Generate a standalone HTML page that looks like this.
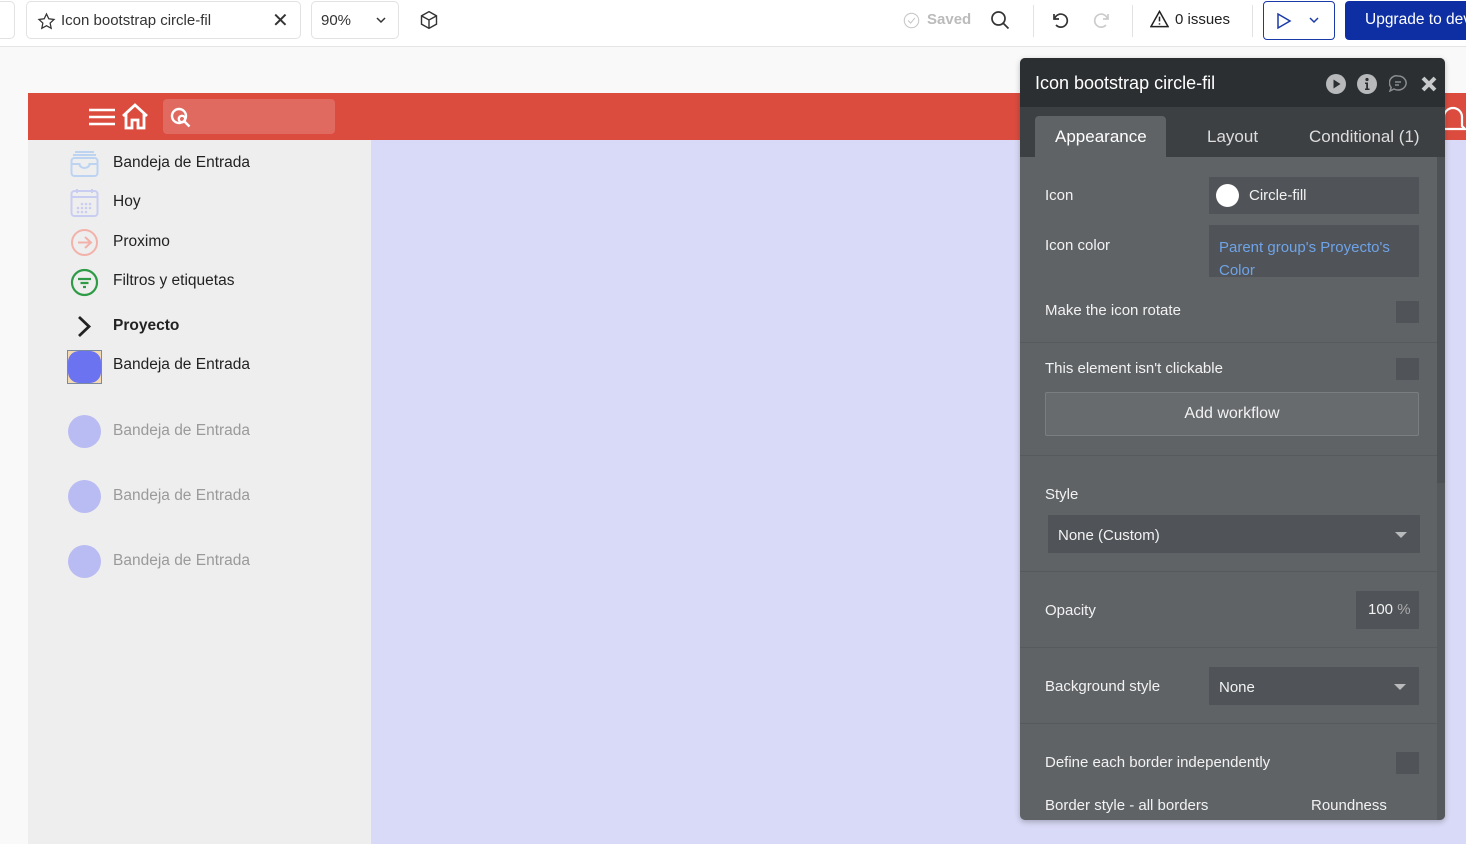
<!DOCTYPE html>
<html><head><meta charset="utf-8"><style>
*{box-sizing:border-box;margin:0;padding:0}
body{width:1466px;height:844px;overflow:hidden;position:relative;background:#f9f9f9;font-family:"Liberation Sans",sans-serif}
.a{position:absolute}
.top{left:0;top:0;width:1466px;height:47px;background:#fff;border-bottom:1px solid #e4e4e4}
.box{border:1px solid #e2e2e2;border-radius:5px;background:#fff}
.t{font-size:15px;color:#333}
.side{left:28px;top:140px;width:343px;height:704px;background:#eeeeee}
.main{left:371px;top:140px;width:1095px;height:704px;background:#d9daf7}
.it{position:absolute;left:113px;font-size:15.5px;color:#222}
.ci{position:absolute;left:68px;width:33px;height:33px;border-radius:50%;background:#b9bbf3}
.p{left:1020px;top:58px;width:425px;height:762px;background:#5f6366;border-radius:5px;overflow:hidden;box-shadow:0 2px 6px rgba(0,0,0,.25);color:#f2f2f2;font-size:15px}
.lbl{position:absolute;left:25px}
.fld{position:absolute;background:#505458}
.chk{position:absolute;left:376px;width:23px;height:22px;background:#505458}
.sep{position:absolute;left:0;width:417px;height:1px;background:#565a5d}
</style></head><body>
<div class="a top">
 <div class="a box" style="left:-10px;top:1px;width:25px;height:38px"></div>
 <div class="a box" style="left:26px;top:1px;width:275px;height:38px">
  <svg class="a" style="left:10px;top:10px" width="19" height="19" viewBox="0 0 24 24" fill="none" stroke="#333" stroke-width="1.6"><path d="M12 2.5l2.9 6.1 6.6.8-4.9 4.6 1.3 6.6L12 17.3 6.1 20.6l1.3-6.6-4.9-4.6 6.6-.8z"/></svg>
  <span class="a t" style="left:34px;top:10px">Icon bootstrap circle-fil</span>
  <span class="a" style="left:245px;top:6px;font-size:20px;color:#333">✕</span>
 </div>
 <div class="a box" style="left:311px;top:1px;width:88px;height:38px">
  <span class="a t" style="left:9px;top:10px">90%</span>
  <svg class="a" style="left:64px;top:15px" width="10" height="7" viewBox="0 0 10 7"><path d="M1 1l4 4 4-4" fill="none" stroke="#333" stroke-width="1.5"/></svg>
 </div>
 <svg class="a" style="left:419px;top:10px" width="20" height="20" viewBox="0 0 24 24" fill="none" stroke="#333" stroke-width="1.7"><path d="M12 2l9 5v10l-9 5-9-5V7z M3 7l9 5 9-5 M12 12v10"/></svg>
 <svg class="a" style="left:903px;top:12px" width="17" height="17" viewBox="0 0 20 20" fill="none" stroke="#c8c8c8" stroke-width="1.3"><circle cx="10" cy="10" r="8.5"/><path d="M6 10l3 3 5-6"/></svg>
 <span class="a" style="left:927px;top:11px;font-size:15px;color:#bbb;font-weight:bold">Saved</span>
 <svg class="a" style="left:990px;top:10px" width="20" height="20" viewBox="0 0 20 20" fill="none" stroke="#333" stroke-width="1.7"><circle cx="8.5" cy="8.5" r="6.5"/><path d="M13.5 13.5l5 5"/></svg>
 <div class="a" style="left:1033px;top:5px;width:1px;height:32px;background:#e2e2e2"></div>
 <svg class="a" style="left:1050px;top:10px" width="20" height="20" viewBox="0 0 20 20" fill="none" stroke="#333" stroke-width="1.7"><path d="M4 4v5h5"/><path d="M4.5 9a6.5 6.5 0 1 1 1.5 6"/></svg>
 <svg class="a" style="left:1092px;top:10px" width="20" height="20" viewBox="0 0 20 20" fill="none" stroke="#ccc" stroke-width="1.7"><path d="M16 4v5h-5"/><path d="M15.5 9a6.5 6.5 0 1 0-1.5 6"/></svg>
 <div class="a" style="left:1132px;top:5px;width:1px;height:32px;background:#e2e2e2"></div>
 <svg class="a" style="left:1150px;top:10px" width="19" height="18" viewBox="0 0 20 19" fill="none" stroke="#222" stroke-width="1.6"><path d="M10 1.5L19 17.5H1z M10 7v5 M10 14v1.5"/></svg>
 <span class="a" style="left:1175px;top:11px;font-size:15px;color:#222">0 issues</span>
 <div class="a" style="left:1252px;top:5px;width:1px;height:32px;background:#e2e2e2"></div>
 <div class="a" style="left:1263px;top:1px;width:72px;height:39px;border:1.5px solid #1a3aa8;border-radius:4px;background:#fff">
  <svg class="a" style="left:12px;top:10px" width="16" height="18" viewBox="0 0 16 18" fill="none" stroke="#1a3aa8" stroke-width="1.5"><path d="M2 2l12 7-12 7z"/></svg>
  <svg class="a" style="left:45px;top:15px" width="10" height="7" viewBox="0 0 10 7"><path d="M1 1l4 4 4-4" fill="none" stroke="#1a3aa8" stroke-width="1.5"/></svg>
 </div>
 <div class="a" style="left:1345px;top:1px;width:130px;height:39px;background:#0d2fa3;border-radius:4px;color:#fff;font-size:15.5px;padding:10px 0 0 20px;white-space:nowrap">Upgrade to dev</div>
</div>

<div class="a" style="left:28px;top:93px;width:1438px;height:47px;background:#db4c3f"></div>
<svg class="a" style="left:89px;top:107px" width="26" height="20" viewBox="0 0 26 20" stroke="#fff" stroke-width="2.6"><path d="M0 3h26M0 10h26M0 17h26"/></svg>
<svg class="a" style="left:121px;top:103px" width="28" height="27" viewBox="0 0 28 27" fill="none" stroke="#fff" stroke-width="2.8"><path d="M2 13L14 2l12 11M5 11v14h6v-8h6v8h6V11"/></svg>
<div class="a" style="left:163px;top:99px;width:172px;height:35px;background:#e06a60;border-radius:4px"></div>
<svg class="a" style="left:170px;top:107px" width="22" height="21" viewBox="0 0 22 21" fill="none" stroke="#fff" stroke-width="2.4"><circle cx="9" cy="9" r="7"/><circle cx="12" cy="12" r="3.2"/><path d="M14.5 14.5l5 5"/></svg>
<svg class="a" style="left:1440px;top:104px" width="26" height="30" viewBox="0 0 26 30" fill="none" stroke="#fff" stroke-width="2.2"><path d="M4 22V13a9 9 0 0 1 18 0v9l3 3H1z"/></svg>

<div class="a side"></div>
<div class="a main"></div>
<svg class="a" style="left:70px;top:150px" width="29" height="27" viewBox="0 0 29 27" fill="none" stroke="#bcd3f2" stroke-width="2"><rect x="1.5" y="8" width="26" height="18" rx="3"/><path d="M5 2h19M3 5h23M1.5 14h8a5 4 0 0 0 10 0h8"/></svg>
<div class="it" style="top:154px">Bandeja de Entrada</div>
<svg class="a" style="left:70px;top:188px" width="29" height="29" viewBox="0 0 29 29" fill="none" stroke="#c9cdf1" stroke-width="2"><rect x="1.5" y="3" width="26" height="25" rx="3"/><path d="M1.5 9h26M7 1v4M22 1v4"/><g fill="#c9cdf1" stroke="none"><circle cx="8" cy="20" r="1.3"/><circle cx="12" cy="20" r="1.3"/><circle cx="16" cy="20" r="1.3"/><circle cx="20" cy="20" r="1.3"/><circle cx="12" cy="16" r="1.3"/><circle cx="16" cy="16" r="1.3"/><circle cx="20" cy="16" r="1.3"/><circle cx="8" cy="24" r="1.3"/><circle cx="12" cy="24" r="1.3"/><circle cx="16" cy="24" r="1.3"/></g></svg>
<div class="it" style="top:193px">Hoy</div>
<svg class="a" style="left:70px;top:228px" width="29" height="29" viewBox="0 0 29 29" fill="none" stroke="#f2b2aa" stroke-width="2"><circle cx="14.5" cy="14.5" r="12.5"/><path d="M8 14.5h13M15 9l6 5.5-6 5.5"/></svg>
<div class="it" style="top:233px">Proximo</div>
<svg class="a" style="left:70px;top:268px" width="29" height="29" viewBox="0 0 29 29" fill="none" stroke="#2e9b47" stroke-width="2.2"><circle cx="14.5" cy="14.5" r="12.5"/><path d="M8 11h13M10.5 15h8M13 19h3"/></svg>
<div class="it" style="top:272px">Filtros y etiquetas</div>
<svg class="a" style="left:76px;top:315px" width="16" height="23" viewBox="0 0 16 23" fill="none" stroke="#222" stroke-width="2.8"><path d="M3 2l10 9.5L3 21"/></svg>
<div class="it" style="top:317px;font-weight:bold">Proyecto</div>
<div class="a" style="left:67px;top:350px;width:35px;height:34px;border:1px solid #7a8aa0;background:#f3d9b0"></div>
<div class="a" style="left:68px;top:351px;width:33px;height:32px;border-radius:11px;background:#6b73f0"></div>
<div class="it" style="top:356px">Bandeja de Entrada</div>
<div class="ci" style="top:415px"></div><div class="it" style="top:422px;color:#9a9a9a">Bandeja de Entrada</div>
<div class="ci" style="top:480px"></div><div class="it" style="top:487px;color:#9a9a9a">Bandeja de Entrada</div>
<div class="ci" style="top:545px"></div><div class="it" style="top:552px;color:#9a9a9a">Bandeja de Entrada</div>

<div class="a p">
 <div class="a" style="left:0;top:0;width:425px;height:49px;background:#2b2f31"></div>
 <div class="a" style="left:15px;top:15px;font-size:18px;color:#fff">Icon bootstrap circle-fil</div>
 <svg class="a" style="left:306px;top:16px" width="20" height="20" viewBox="0 0 20 20"><circle cx="10" cy="10" r="10" fill="#b8b9ba"/><path d="M7.5 5.5l7 4.5-7 4.5z" fill="#2b2f31"/></svg>
 <svg class="a" style="left:337px;top:16px" width="20" height="20" viewBox="0 0 20 20"><circle cx="10" cy="10" r="10" fill="#b8b9ba"/><circle cx="10" cy="5.5" r="1.6" fill="#2b2f31"/><path d="M8 8.5h3v6h1.5v1.5h-4.5v-1.5h1.2V10H8z" fill="#2b2f31"/></svg>
 <svg class="a" style="left:369px;top:17px" width="18" height="17" viewBox="0 0 18 17" fill="none" stroke="#8a8c8e" stroke-width="1.5"><path d="M9 1a8 7 0 1 1-4 13l-4 2 1.2-3.5A7 7 0 0 1 9 1z M6 7h6M6 10h4"/></svg>
 <svg class="a" style="left:401px;top:18px" width="16" height="16" viewBox="0 0 16 16" stroke="#c8c9ca" stroke-width="4"><path d="M2 2l12 12M14 2L2 14"/></svg>
 <div class="a" style="left:0;top:49px;width:425px;height:50px;background:#3d4043"></div>
 <div class="a" style="left:15px;top:58px;width:131px;height:42px;background:#5f6366;border-radius:4px 4px 0 0"></div>
 <div class="a" style="left:35px;top:69px;font-size:17px;color:#fff">Appearance</div>
 <div class="a" style="left:187px;top:69px;font-size:17px;color:#ddd">Layout</div>
 <div class="a" style="left:289px;top:69px;font-size:17px;color:#ddd">Conditional (1)</div>
 <div class="a" style="left:417px;top:99px;width:8px;height:663px;background:#55595c"></div>
 <div class="a" style="left:417px;top:99px;width:8px;height:326px;background:#4d5154"></div>

 <div class="lbl" style="top:129px">Icon</div>
 <div class="fld" style="left:189px;top:119px;width:210px;height:37px"></div>
 <div class="a" style="left:196px;top:126px;width:23px;height:23px;border-radius:50%;background:#fff"></div>
 <div class="a" style="left:229px;top:129px">Circle-fill</div>
 <div class="lbl" style="top:179px">Icon color</div>
 <div class="fld" style="left:189px;top:167px;width:210px;height:52px"></div>
 <div class="a" style="left:199px;top:178px;line-height:23px;color:#6fa3e8">Parent group's Proyecto's<br>Color</div>
 <div class="lbl" style="top:244px">Make the icon rotate</div>
 <div class="chk" style="top:243px"></div>
 <div class="sep" style="top:284px"></div>
 <div class="lbl" style="top:302px">This element isn't clickable</div>
 <div class="chk" style="top:300px"></div>
 <div class="a" style="left:25px;top:334px;width:374px;height:44px;background:#676b6e;border:1px solid #7a7e81;border-radius:2px;text-align:center;padding-top:12px;font-size:16px">Add workflow</div>
 <div class="sep" style="top:397px"></div>
 <div class="lbl" style="top:428px">Style</div>
 <div class="fld" style="left:28px;top:457px;width:372px;height:38px"></div>
 <div class="a" style="left:38px;top:469px">None (Custom)</div>
 <div class="a" style="left:375px;top:474px;border:6px solid transparent;border-top:6px solid #b8babb"></div>
 <div class="sep" style="top:513px"></div>
 <div class="lbl" style="top:544px">Opacity</div>
 <div class="fld" style="left:336px;top:533px;width:63px;height:38px"></div>
 <div class="a" style="left:348px;top:543px">100 <span style="color:#aaa">%</span></div>
 <div class="sep" style="top:589px"></div>
 <div class="lbl" style="top:620px">Background style</div>
 <div class="fld" style="left:189px;top:609px;width:210px;height:38px"></div>
 <div class="a" style="left:199px;top:621px">None</div>
 <div class="a" style="left:374px;top:626px;border:6px solid transparent;border-top:6px solid #b8babb"></div>
 <div class="sep" style="top:665px"></div>
 <div class="lbl" style="top:696px">Define each border independently</div>
 <div class="chk" style="top:694px"></div>
 <div class="lbl" style="top:739px">Border style - all borders</div>
 <div class="a" style="left:291px;top:739px">Roundness</div>
</div>
</body></html>
